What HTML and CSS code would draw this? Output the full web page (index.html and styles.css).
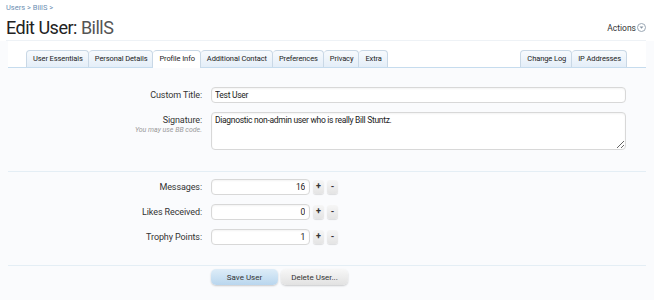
FILE: index.html
```html
<!DOCTYPE html>
<html lang="en">
<head>
    <meta charset="UTF-8">
    <title>Edit User: BillS</title>
    <link rel="stylesheet" href="styles.css">
</head>
<body>
    <div class="header">
        <div class="crumbs"><a href="#">Users</a> &gt; <a href="#">BillS</a> &gt;</div>
        <div class="title-row">
            <h1>Edit User: <span class="name">BillS</span></h1>
            <a class="actions" href="#">Actions<span class="arrow"><svg width="9" height="9" viewBox="0 0 9 9"><circle cx="4.5" cy="4.5" r="4" fill="#fff" stroke="#9aa7b4"/><path d="M2.6 3.6h3.8L4.5 5.8z" fill="#8593a2"/></svg></span></a>
        </div>
    </div>

    <div class="tabs">
        <div class="tab-group">
            <a class="tab" href="#">User Essentials</a>
            <a class="tab" href="#">Personal Details</a>
            <a class="tab active" href="#">Profile Info</a>
            <a class="tab" href="#">Additional Contact</a>
            <a class="tab" href="#">Preferences</a>
            <a class="tab" href="#">Privacy</a>
            <a class="tab" href="#">Extra</a>
        </div>
        <div class="tab-group">
            <a class="tab" href="#">Change Log</a>
            <a class="tab" href="#">IP Addresses</a>
        </div>
    </div>

    <form class="form">
        <div class="row">
            <label class="label">Custom Title:</label>
            <input class="text wide" type="text" value="Test User">
        </div>
        <div class="row">
            <div class="label">Signature:<span class="hint">You may use BB code.</span></div>
            <textarea class="text wide area">Diagnostic non-admin user who is really Bill Stuntz.</textarea>
        </div>

        <hr class="sep first">

        <div class="row">
            <label class="label">Messages:</label>
            <input class="text num" type="text" value="16">
            <span class="spin">+</span><span class="spin">-</span>
        </div>
        <div class="row">
            <label class="label">Likes Received:</label>
            <input class="text num" type="text" value="0">
            <span class="spin">+</span><span class="spin">-</span>
        </div>
        <div class="row">
            <label class="label">Trophy Points:</label>
            <input class="text num" type="text" value="1">
            <span class="spin">+</span><span class="spin">-</span>
        </div>

        <hr class="sep second">

        <div class="buttons">
            <button type="button" class="btn primary">Save User</button>
            <button type="button" class="btn">Delete User...</button>
        </div>
    </form>
</body>
</html>
```

FILE: styles.css
```css
body {
    margin: 0;
    font-family: Roboto, 'Liberation Sans', sans-serif;
    font-size: 9px;
    color: #333;
    background-color: #fafbfd;
    width: 654px;
    height: 300px;
    overflow: hidden;
}
a {
    text-decoration: none;
}
.header {
    background-color: #fff;
    padding: 3px 8px 0 6px;
}
.crumbs {
    font-size: 7.5px;
    color: #6d8fb3;
    height: 12px;
}
.crumbs a {
    color: #6d8fb3;
}
.title-row {
    display: flex;
    justify-content: space-between;
    align-items: center;
    height: 25px;
    border-bottom: 1px solid #eef2f6;
}
h1 {
    margin: 0;
    font-size: 18px;
    font-weight: normal;
    color: #222;
    letter-spacing: -0.5px;
}
h1 .name {
    color: #555;
}
.actions {
    color: #333;
    font-size: 8.5px;
    display: flex;
    align-items: center;
    gap: 1px;
}
.arrow {
    display: flex;
}
.tabs {
    display: flex;
    justify-content: space-between;
    padding: 9px 19px 0 18px;
    margin: 0 8px;
    border-bottom: 1px solid #c6dcee;
    background-color: #fff;
}
.tab-group {
    display: flex;
}
.tab {
    display: block;
    height: 16px;
    line-height: 16px;
    padding: 0 5px 0 6px;
    font-size: 7.5px;
    letter-spacing: -0.1px;
    color: #222;
    border: 1px solid #c9d8e6;
    border-bottom: none;
    border-left: none;
    border-radius: 4px 4px 0 0;
    background: linear-gradient(#f7fafd, #e4eef8);
    margin-bottom: -1px;
}
.tab-group .tab:first-child {
    border-left: 1px solid #c9d8e6;
}
.tab.active {
    background: #fff;
    height: 17px;
}
.form {
    padding-top: 19px;
}
.row {
    display: flex;
    align-items: flex-start;
    margin-bottom: 9px;
}
.label {
    width: 202px;
    text-align: right;
    padding-top: 3px;
    color: #333;
    font-size: 9px;
    letter-spacing: -0.1px;
    flex-shrink: 0;
    box-sizing: border-box;
}
.hint {
    display: block;
    font-size: 7px;
    font-style: italic;
    color: #999;
    letter-spacing: 0;
    margin-top: 1px;
}
.text {
    margin-left: 9px;
    box-sizing: border-box;
    height: 16px;
    border: 1px solid #d8d8d8;
    border-radius: 4px;
    background: #fff;
    font-family: inherit;
    font-size: 8.5px;
    letter-spacing: -0.3px;
    color: #222;
    padding: 1px 3px;
    box-shadow: inset 0 1px 2px rgba(0,0,0,0.05);
    outline: none;
}
.wide {
    width: 415px;
}
.area {
    height: 38px;
    resize: vertical;
    padding-top: 2px;
}
.sep {
    border: none;
    border-top: 1px solid #e4eef5;
    margin: 0 8px;
}
.sep.first {
    margin-top: 21px;
    margin-bottom: 7px;
}
.sep.second {
    margin-top: 20px;
    margin-bottom: 3px;
}
.num {
    width: 99px;
    text-align: right;
    padding-right: 4px;
}
.row .num ~ .spin {
    margin-left: 3px;
}
.spin {
    margin-top: 1px;
    width: 11px;
    height: 14px;
    line-height: 13px;
    text-align: center;
    font-size: 9px;
    font-weight: bold;
    border-radius: 3px;
    background: linear-gradient(#f6f6f6, #e4e4e4);
    box-shadow: 0 1px 1px rgba(0,0,0,0.12);
    color: #333;
}
.buttons {
    display: flex;
    gap: 3px;
    padding-left: 211px;
}
.btn {
    height: 16px;
    padding: 0;
    border: none;
    border-radius: 5px;
    font-family: inherit;
    font-size: 8px;
    color: #333;
    width: 67px;
    background: linear-gradient(#f7f7f7, #e2e2e2);
    box-shadow: 0 1px 2px rgba(0,0,0,0.2);
    cursor: pointer;
}
.btn.primary {
    background: linear-gradient(#deedf8, #b9d6ee);
}
```
